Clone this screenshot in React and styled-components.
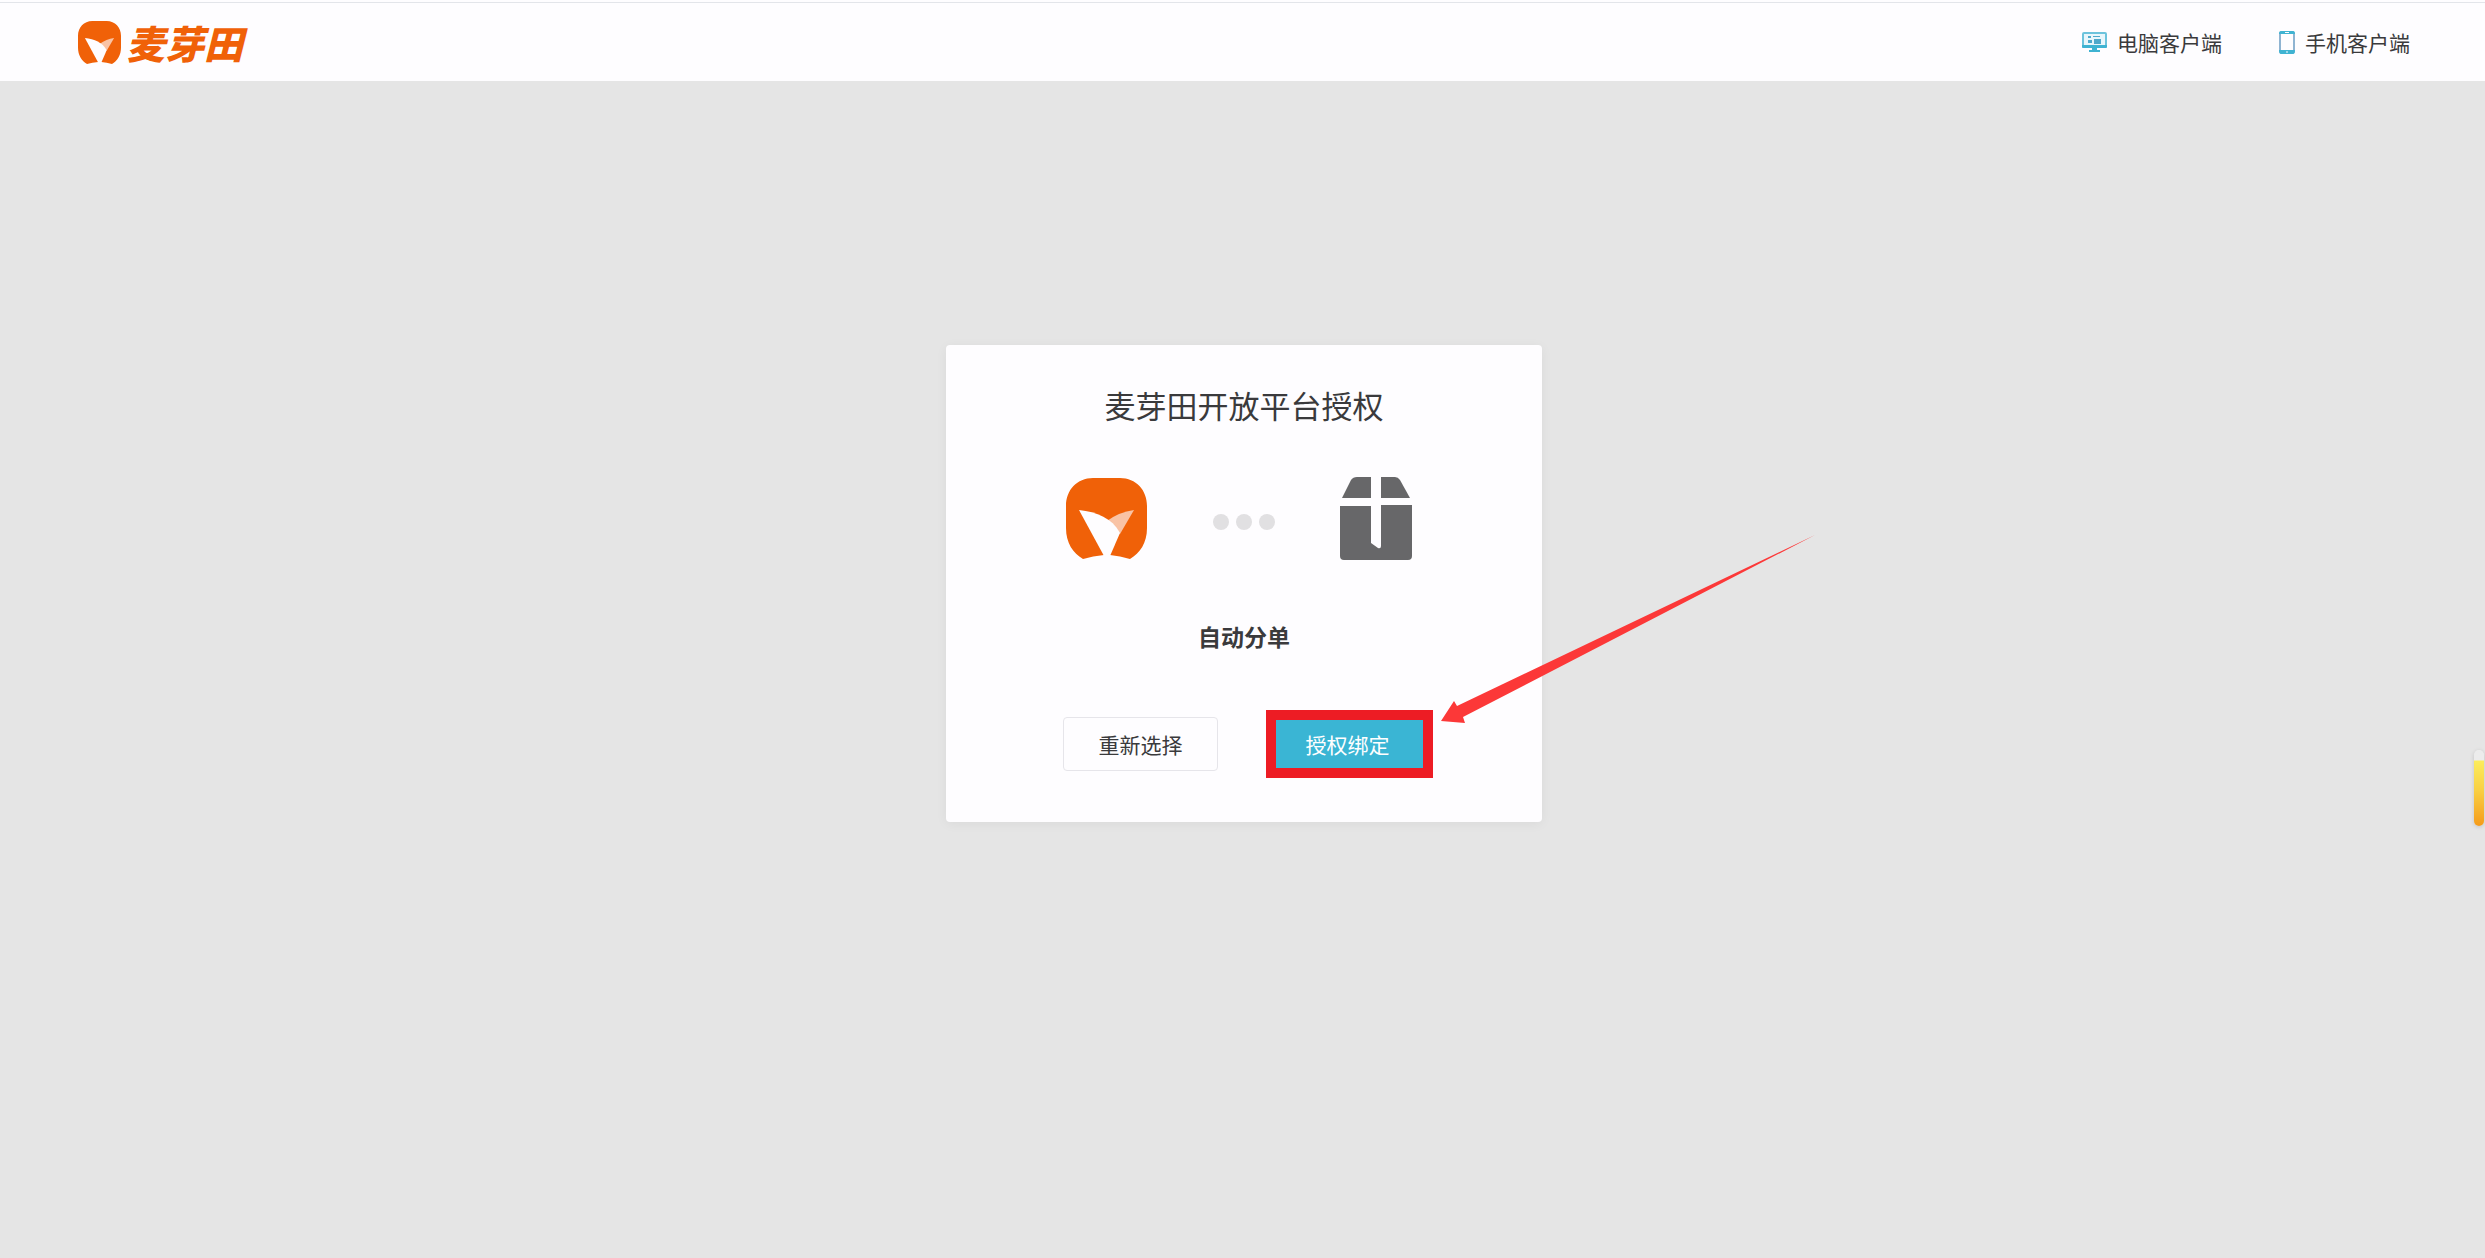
import React from 'react';
import styled, { createGlobalStyle } from 'styled-components';

const GlobalStyle = createGlobalStyle`
  * {
    box-sizing: border-box;
  }
  body {
    margin: 0;
    background-color: #e5e5e5;
    color: #3a3a3c;
    font-family: "Noto Sans CJK SC", sans-serif;
    font-size: 21px;
  }
`;

const Page = styled.div`
  min-height: 100vh;
  padding-top: 2px;
  background: linear-gradient(#fefdff 2px, transparent 2px);
`;

const Header = styled.header`
  display: flex;
  align-items: center;
  justify-content: space-between;
  height: 79px;
  padding: 0 75px 0 78px;
  border-top: 1px solid #e3e5ea;
  background-color: #fefdff;
`;

const Brand = styled.a`
  display: flex;
  align-items: center;
  gap: 5px;
  color: #f06108;
  font-size: 39px;
  font-style: italic;
  font-weight: 900;
  line-height: 40px;
  text-decoration: none;
`;

const Nav = styled.nav`
  display: flex;
  gap: 57px;
`;

const NavLink = styled.a`
  display: flex;
  align-items: center;
  gap: 10px;
  color: #3a3a3c;
  line-height: 32px;
  text-decoration: none;
`;

const Main = styled.main`
  display: flex;
  justify-content: center;
  padding: 264px 75px 60px 78px;
`;

const Card = styled.section`
  width: 596px;
  padding: 37px 0 51px;
  border-radius: 4px;
  background-color: #fefdff;
  box-shadow: 0 2px 12px rgba(0, 0, 0, 0.05);
  text-align: center;
`;

const Title = styled.h1`
  margin: 0;
  font-size: 31px;
  font-weight: 400;
  line-height: 46px;
`;

const Link = styled.div`
  display: flex;
  align-items: center;
  justify-content: space-between;
  margin-top: 49px;
  padding: 0 130px 0 120px;
`;

const Dots = styled.div`
  display: flex;
  gap: 7px;
  padding-top: 7px;
`;

const Dot = styled.span`
  width: 16px;
  height: 16px;
  border-radius: 50%;
  background-color: #e1e0e2;
`;

const AppName = styled.h2`
  margin: 59px 0 0;
  font-size: 23px;
  font-weight: 700;
  line-height: 34px;
`;

const Actions = styled.div`
  display: flex;
  justify-content: center;
  gap: 52px;
  margin-top: 64px;
`;

const Button = styled.button`
  width: 155px;
  height: 54px;
  padding: 0;
  border: 1px solid ${({ $primary }) => ($primary ? '#3ab5d4' : '#e6e5ea')};
  border-radius: 4px;
  background-color: ${({ $primary }) => ($primary ? '#3ab5d4' : '#fefdff')};
  color: ${({ $primary }) => ($primary ? '#fff' : '#3a3a3c')};
  font-family: inherit;
  font-size: 21px;
  cursor: pointer;
`;

const Marked = styled.div`
  position: relative;
  &::after {
    content: '';
    position: absolute;
    inset: -7px -8px -7px -4px;
    border: 10px solid #ed1c24;
    pointer-events: none;
  }
`;

const Arrow = styled.svg`
  position: absolute;
  left: 171px;
  top: -182px;
  pointer-events: none;
`;

const SideTab = styled.div`
  position: fixed;
  right: 1px;
  bottom: 432px;
  width: 10px;
  height: 76px;
  border-radius: 5px;
  background: linear-gradient(#ececec 10px, #fbec5c 11px, #f9d043 40px, #f59b1a);
  box-shadow: 0 1px 4px rgba(0, 0, 0, 0.15);
`;

const LogoMark = ({ size }) => (
  <svg width={size} height={size} viewBox="0 0 81 81" aria-hidden="true">
    <path
      fill="#f06108"
      d="M27 0H54C70 0 81 12 81 28V50C81 65 74 75 64 81Q54 78 44 77H38Q27 78 17 81C7 75 0 65 0 50V28C0 12 11 0 27 0Z"
    />
    <path fill="#f9c3a5" d="M41 43Q53 34 68 32L54 56Z" />
    <path fill="#fefdff" d="M13 32C31 34 46 40 54 55L44 78H38Z" />
  </svg>
);

const BoxIcon = () => (
  <svg width="72" height="83" viewBox="0 0 72 83" aria-hidden="true">
    <g fill="#676769">
      <path d="M31 0H17Q13 0 11 3L2 21H31Z" />
      <path d="M41 0H55Q58 0 60 3L70 21H41Z" />
      <path d="M0 29H31V66L38 71Q41 72 41 69V28H72V79Q72 83 68 83H4Q0 83 0 79Z" />
    </g>
  </svg>
);

const MonitorIcon = () => (
  <svg width="25" height="21" viewBox="0 0 25 21" aria-hidden="true">
    <rect x="1" y="1" width="23" height="14" rx="1" fill="#e8f6fb" stroke="#6cc3dc" strokeWidth="2" />
    <path fill="#3fb3d2" d="M0 13H25V15Q25 16 24 16H1Q0 16 0 15ZM10 16H15V18H18V20H7V18H10Z" />
    <path fill="#4fa9cb" d="M6 4H9V6H6ZM11 4H18V5H11ZM6 8H10V11H6ZM12 7H19V12H12Z" />
  </svg>
);

const PhoneIcon = () => (
  <svg width="16" height="23" viewBox="0 0 16 23" aria-hidden="true">
    <rect x="1" y="1" width="14" height="21" rx="2" fill="#fefdff" stroke="#8fb4d2" strokeWidth="2" />
    <path fill="#3fb3d2" d="M2 0H14Q16 0 16 3H0Q0 0 2 0ZM0 19H16Q16 23 14 23H2Q0 23 0 19Z" />
    <path stroke="#fefdff" d="M6 1.5H10M7 21H9" />
  </svg>
);

const App = () => {
  return (
    <Page>
      <GlobalStyle />
      <Header>
        <Brand href="#">
          <LogoMark size={43} />
          麦芽田
        </Brand>
        <Nav>
          <NavLink href="#">
            <MonitorIcon />
            电脑客户端
          </NavLink>
          <NavLink href="#">
            <PhoneIcon />
            手机客户端
          </NavLink>
        </Nav>
      </Header>
      <Main>
        <Card>
          <Title>麦芽田开放平台授权</Title>
          <Link>
            <LogoMark size={81} />
            <Dots>
              <Dot />
              <Dot />
              <Dot />
            </Dots>
            <BoxIcon />
          </Link>
          <AppName>自动分单</AppName>
          <Actions>
            <Button type="button">重新选择</Button>
            <Marked>
              <Button type="button" $primary>授权绑定</Button>
              <Arrow width="374" height="188" viewBox="0 0 374 188" aria-hidden="true">
                <path fill="#fc3838" d="M0 186L13 166L16 171L374 0L22 182L24 188Z" />
              </Arrow>
            </Marked>
          </Actions>
        </Card>
      </Main>
      <SideTab />
    </Page>
  );
};

export default App;
